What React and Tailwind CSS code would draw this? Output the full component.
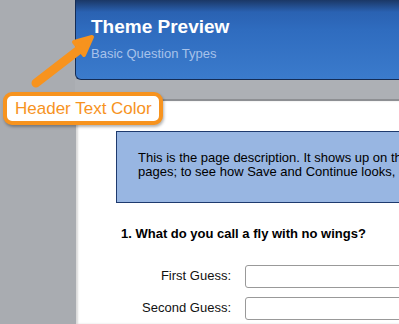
import React from 'react';

const font = { fontFamily: '"Liberation Sans", Arial, Helvetica, sans-serif' };

function Field({ label }) {
  return (
    <div className="flex items-center h-[22px] mb-[10px]">
      <div className="w-[155px] text-right pr-[14px] text-[13px] text-[#111]">{label}</div>
      <div className="flex-1 h-[23px] border border-[#999] rounded-[3px] bg-white" />
    </div>
  );
}

export default function App() {
  return (
    <div className="relative w-[399px] h-[324px] overflow-hidden bg-[#a9acb1] flex" style={font}>
      {/* left strip */}
      <div className="w-[75px] shrink-0" />

      <div className="flex flex-col w-[420px] shrink-0">
        {/* header */}
        <div className="h-[80px] shrink-0 rounded-bl-[6px] border-l border-b border-[#142c55] bg-[linear-gradient(180deg,#1b3866_0px,#2a62b2_12px,#2f6cbf_30px,#3b7bcc_100%)] pl-[15px] pt-[16px]">
          <div className="text-[19px] leading-[22px] font-bold text-white">Theme Preview</div>
          <div className="text-[13px] leading-[16px] mt-[8px] text-[#a7c2ea]">Basic Question Types</div>
        </div>

        {/* grey gap */}
        <div className="h-[21px] shrink-0 bg-[#adb0b5] border-b-2 border-[#8d8f93]" />

        {/* page */}
        <div className="flex-1 min-h-0 bg-white ml-[1px] pt-[30px] pl-[40px] shadow-[inset_2px_0_2px_rgba(0,0,0,0.15)]">
          <div className="border border-[#1e3a6e] bg-[#98b6e2] pl-[21px] pt-[19px] h-[72px] text-[13px] leading-[14px] text-black whitespace-nowrap">
            This is the page description. It shows up on the top of all
            <br />
            pages; to see how Save and Continue looks, click Next.
          </div>

          <div className="mt-[23px] ml-[5px] text-[13px] leading-[16px] font-bold text-black whitespace-nowrap">
            1. What do you call a fly with no wings?
          </div>

          <div className="mt-[23px] ml-[-26px] w-[330px]">
            <Field label="First Guess:" />
            <Field label="Second Guess:" />
          </div>
        </div>
      </div>

      {/* arrow */}
      <svg className="absolute left-0 top-0" width="120" height="100" viewBox="0 0 120 100">
        <g fill="#f7931e" strokeLinejoin="round">
          <line x1="36" y1="83" x2="80" y2="49" stroke="#f7931e" strokeWidth="9" strokeLinecap="round" />
          <polygon points="92,37 74,42 84,55" strokeWidth="4" stroke="#f7931e" />
        </g>
      </svg>

      {/* callout */}
      <div className="absolute left-[3px] top-[92px] w-[160px] h-[33px] rounded-[9px] border-4 border-[#f7931e] bg-white shadow-[1px_2px_3px_rgba(0,0,0,0.3)] flex items-center pl-[8px]">
        <span className="text-[17px] leading-[20px] text-[#f7931e]">Header Text Color</span>
      </div>
    </div>
  );
}
